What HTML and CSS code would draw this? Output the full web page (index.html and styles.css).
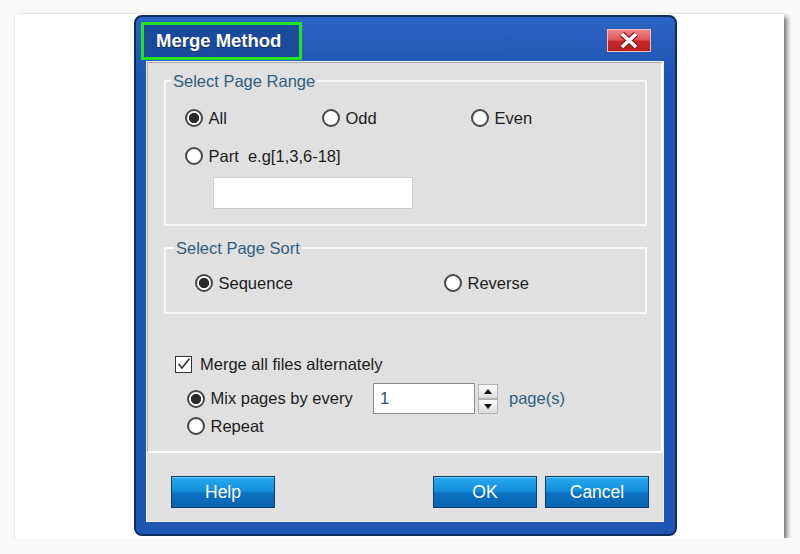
FILE: index.html
```html
<!DOCTYPE html>
<html lang="en">
<head>
    <meta charset="UTF-8">
    <title>Merge Method</title>
    <link rel="stylesheet" href="styles.css">
</head>
<body>
    <div class="sheet">
        <div class="dialog">
            <div class="titlebar">
                <div class="title">Merge Method</div>
                <div class="close">
                    <svg width="42" height="21" viewBox="0 0 42 21">
                        <path d="M14 4 L28 17 M28 4 L14 17" stroke="#8e1414" stroke-width="6" fill="none"/>
                        <path d="M14 4 L28 17 M28 4 L14 17" stroke="#fff" stroke-width="3.6" fill="none"/>
                    </svg>
                </div>
            </div>

            <div class="panel">
                <div class="content">
                    <fieldset class="group range">
                        <legend>Select Page Range</legend>
                        <div class="group-body">
                            <div class="opts">
                                <label class="opt"><span class="radio on"></span>All</label>
                                <label class="opt"><span class="radio"></span>Odd</label>
                                <label class="opt"><span class="radio"></span>Even</label>
                            </div>
                            <label class="opt part"><span class="radio"></span>Part&nbsp; e.g[1,3,6-18]</label>
                            <input class="field" type="text">
                        </div>
                    </fieldset>

                    <fieldset class="group sort">
                        <legend>Select Page Sort</legend>
                        <div class="group-body">
                            <label class="opt"><span class="radio on"></span>Sequence</label>
                            <label class="opt"><span class="radio"></span>Reverse</label>
                        </div>
                    </fieldset>

                    <div class="merge">
                        <label class="opt check-row">
                            <span class="checkbox">
                                <svg width="14" height="14" viewBox="0 0 14 14">
                                    <path d="M1.5 7 L5 11 L12.5 1.5" stroke="#333" stroke-width="1.6" fill="none"/>
                                </svg>
                            </span>
                            Merge all files alternately
                        </label>
                        <div class="mix">
                            <label class="opt mix-label"><span class="radio on"></span>Mix pages by every</label>
                            <input class="spin-field" type="text" value="1">
                            <div class="arrows">
                                <span class="arrow">
                                    <svg width="8" height="5" viewBox="0 0 8 5"><path d="M0 5 L4 0 L8 5 Z" fill="#111"/></svg>
                                </span>
                                <span class="arrow">
                                    <svg width="8" height="5" viewBox="0 0 8 5"><path d="M0 0 L8 0 L4 5 Z" fill="#111"/></svg>
                                </span>
                            </div>
                            <span class="pages">page(s)</span>
                        </div>
                        <label class="opt repeat"><span class="radio"></span>Repeat</label>
                    </div>
                </div>

                <div class="footer">
                    <button class="btn help">Help</button>
                    <button class="btn">OK</button>
                    <button class="btn">Cancel</button>
                </div>
            </div>
        </div>
    </div>
</body>
</html>
```

FILE: styles.css
```css
* {
    margin: 0;
    padding: 0;
    box-sizing: border-box;
}

body {
    font-family: "Liberation Sans", Arial, sans-serif;
    background: #fafafa;
    padding: 14px 16px 0 15px;
}

.sheet {
    height: 524px;
    background: #fff;
    padding: 1px 0 0 119px;
    box-shadow: 3px 3px 5px rgba(0, 0, 0, 0.55), 0 0 2px rgba(0, 0, 0, 0.08);
}

.dialog {
    width: 543px;
    height: 521px;
    border: 2px solid #0f2d5c;
    border-radius: 8px;
    background: linear-gradient(#2b65c4, #1f56b3 10%, #1f56b3);
    display: flex;
    flex-direction: column;
}

/* title bar */
.titlebar {
    height: 44px;
    display: flex;
    justify-content: space-between;
    align-items: flex-start;
    padding: 0 24px 0 5px;
}

.title {
    margin-top: 5px;
    width: 161px;
    height: 38px;
    border: 3px solid #22e322;
    background: #1a4a9c;
    color: #fff;
    font-size: 18.5px;
    font-weight: bold;
    line-height: 32px;
    padding-left: 12px;
    text-shadow: 0 1px 1px rgba(0, 0, 0, 0.4);
}

.close {
    margin-top: 12px;
    width: 44px;
    height: 23px;
    border: 1px solid #f4b8b8;
    background: linear-gradient(#ef8585, #e05656 45%, #c62828 55%, #b81d1d);
    display: flex;
}

/* body panel */
.panel {
    flex: 1;
    margin: 0 11px 12px 10px;
    background: #e0e0e0;
    border: 1px solid #f2f2f2;
    display: flex;
    flex-direction: column;
}

.content {
    border-style: solid;
    border-width: 1px 2px 2px 1px;
    border-color: #a9a9a9 #fafafa #fafafa #a9a9a9;
    padding: 9px 14px 13px 16px;
}

.group {
    border: 2px solid #f7f7f7;
    padding: 0 0 0 5px;
    min-width: 0;
}

.group legend {
    padding: 0 2px;
    font-size: 16.5px;
    line-height: 18px;
    color: #2f5e7e;
}

.opt {
    display: flex;
    align-items: center;
    gap: 6px;
    height: 24px;
    font-size: 16.5px;
    color: #1c1c1c;
}

.radio {
    flex: none;
    width: 18px;
    height: 18px;
    margin-left: -0.5px;
    border-radius: 50%;
    border: 2px solid #484848;
    background: radial-gradient(circle, #fff 50%, #ececec);
}

.radio.on {
    background: radial-gradient(circle, #2a2a2a 0 4.8px, #fff 5.4px);
}

.range .group-body {
    padding: 16px 0 15px 14px;
}

.opts {
    display: grid;
    grid-template-columns: 137px 149px auto;
}

.part {
    margin-top: 14px;
}

.field {
    display: block;
    margin: 9px 0 0 28px;
    width: 200px;
    height: 32px;
    border: 1px solid #cfcfcf;
    background: #fff;
}

.sort {
    margin-top: 13px;
}

.sort legend {
    margin-left: 3px;
}

.sort .group-body {
    padding: 14px 0 17px 24px;
    display: grid;
    grid-template-columns: 249px auto;
}

/* merge options */
.merge {
    margin: 38px 0 0 11px;
}

.check-row {
    gap: 8px;
}

.checkbox {
    flex: none;
    width: 17px;
    height: 17px;
    border: 1.5px solid #333;
    background: #fff;
    display: flex;
    align-items: center;
    justify-content: center;
}

.mix {
    margin: 7px 0 0 12px;
    height: 31px;
    display: flex;
    align-items: center;
}

.mix-label {
    width: 186px;
}

.spin-field {
    width: 102px;
    height: 31px;
    border: 1px solid #8c8c8c;
    padding-left: 6px;
    font-family: "Liberation Sans", Arial, sans-serif;
    font-size: 16.5px;
    color: #2a4d86;
    background: #fff;
}

.arrows {
    margin-left: 3px;
    width: 20px;
    height: 30px;
    display: flex;
    flex-direction: column;
}

.arrow {
    flex: 1;
    border: 1px solid #b4b4b4;
    background: linear-gradient(#fbfbfb, #dcdcdc);
    display: flex;
    align-items: center;
    justify-content: center;
}

.pages {
    margin-left: 11px;
    font-size: 16.5px;
    color: #2e5f82;
}

.repeat {
    margin-left: 12px;
}

/* buttons */
.footer {
    flex: 1;
    display: flex;
    gap: 8px;
    padding: 23px 14px 13px 24px;
}

.btn {
    width: 104px;
    height: 32px;
    border: 1px solid #0c3c70;
    background: linear-gradient(#27aaf0, #148edb 45%, #0b71c0 55%, #0a63ad);
    color: #fff;
    font-family: "Liberation Sans", Arial, sans-serif;
    font-size: 17.5px;
    box-shadow: inset 0 1px 0 rgba(255, 255, 255, 0.35);
}

.help {
    margin-right: auto;
}
```
